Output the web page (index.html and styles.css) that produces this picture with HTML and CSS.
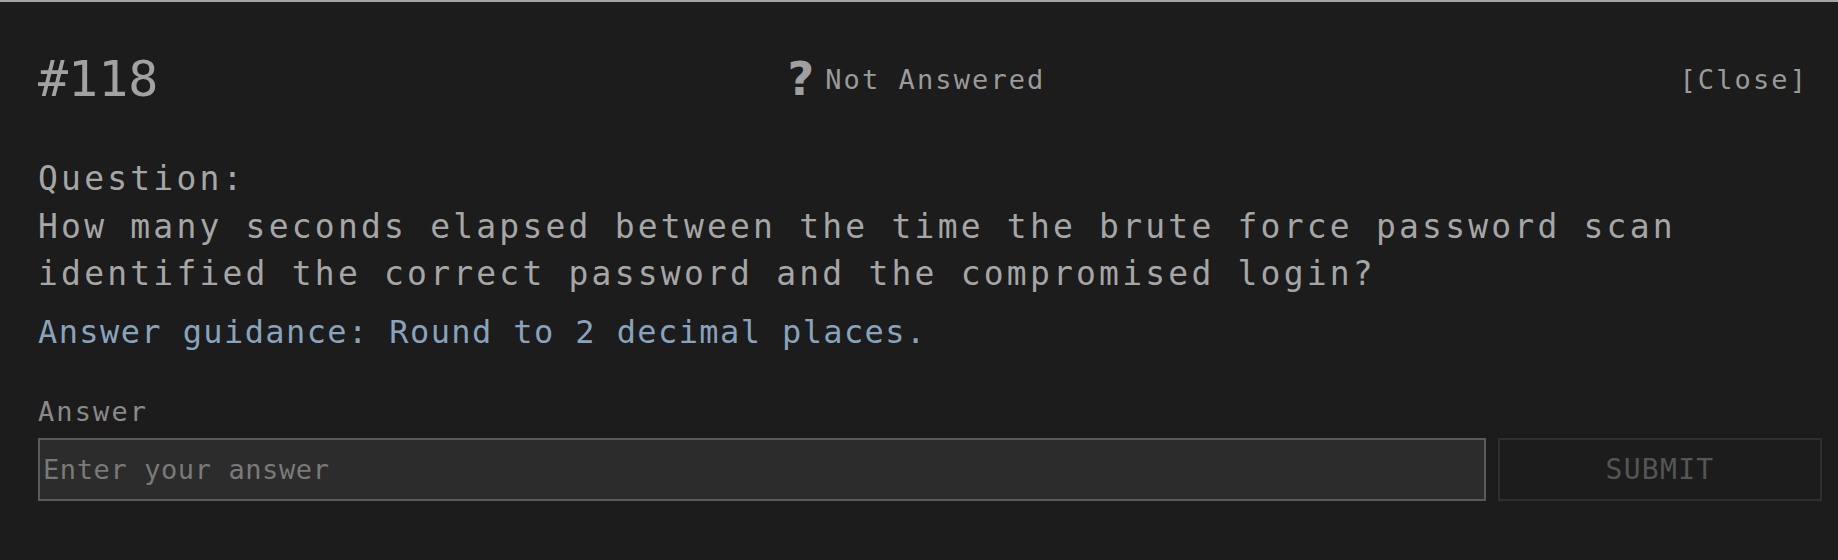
FILE: index.html
```html
<!DOCTYPE html>
<html lang="en">
<head>
<meta charset="utf-8">
<title>#118 Question</title>
<link rel="stylesheet" href="styles.css">
</head>
<body>
<div class="panel">
  <header class="head">
    <div class="num">#118</div>
    <div class="status"><span class="status-icon">?</span><span class="status-text">Not Answered</span></div>
    <div class="close-wrap"><span class="close">[Close]</span></div>
  </header>
  <section class="question">
    <div class="q-label">Question:</div>
    <div class="q-text">How many seconds elapsed between the time the brute force password scan identified the correct password and the compromised login?</div>
  </section>
  <div class="guidance">Answer guidance: Round to 2 decimal places.</div>
  <label class="answer-label" for="answer">Answer</label>
  <div class="answer-row">
    <input id="answer" class="answer-input" type="text" placeholder="Enter your answer">
    <button class="submit" type="button">SUBMIT</button>
  </div>
</div>
</body>
</html>
```
FILE: styles.css
```css
html, body {
  margin: 0;
  padding: 0;
  background: #1c1c1c;
}
body {
  font-family: "DejaVu Sans Mono", "Liberation Mono", monospace;
  color: #a0a0a0;
}
.panel {
  border-top: 2px solid #a4a4a4;
  padding: 52px 16px 0 38px;
  height: 506px;
}
.head {
  display: grid;
  grid-template-columns: 1fr auto 1fr;
  align-items: center;
  padding-right: 14px;
}
.num {
  font-size: 50px;
  line-height: 1;
  color: #a2a2a2;
}
.status {
  display: flex;
  align-items: center;
  padding-right: 13px;
  color: #9a9a9a;
}
.status-icon {
  font-family: "DejaVu Sans", sans-serif;
  font-weight: bold;
  font-size: 46px;
  line-height: 1;
  margin-right: 11px;
  color: #a0a0a0;
}
.status-text {
  font-size: 27px;
  line-height: 1;
  letter-spacing: 2.1px;
}
.close-wrap {
  display: flex;
  justify-content: flex-end;
}
.close {
  font-size: 27px;
  line-height: 1;
  letter-spacing: 2.1px;
  color: #9a9a9a;
}
.question {
  margin-top: 51px;
  font-size: 33px;
  line-height: 47.5px;
  letter-spacing: 3.2px;
  color: #a6a6a6;
}
.guidance {
  margin-top: 12px;
  font-size: 32px;
  line-height: 44.8px;
  letter-spacing: 1.4px;
  color: #89a2bd;
}
.answer-label {
  display: block;
  margin-top: 42px;
  font-size: 27px;
  line-height: 32.4px;
  letter-spacing: 2.1px;
  color: #8a8a8a;
}
.answer-row {
  display: flex;
  gap: 12px;
  margin-top: 9px;
  height: 63px;
}
.answer-input {
  flex: 1;
  box-sizing: border-box;
  height: 63px;
  margin: 0;
  padding: 0 0 0 3px;
  background: #2c2c2c;
  border: 2px solid #5a5a5a;
  border-radius: 0;
  outline: none;
  font-family: "DejaVu Sans Mono", "Liberation Mono", monospace;
  font-size: 27px;
  letter-spacing: 0.6px;
  color: #a0a0a0;
}
.answer-input::placeholder {
  color: #7a7a7a;
}
.submit {
  box-sizing: border-box;
  width: 324px;
  height: 63px;
  margin: 0;
  padding: 0;
  background: transparent;
  border: 2px solid #2f2f2f;
  border-radius: 0;
  font-family: "DejaVu Sans Mono", "Liberation Mono", monospace;
  font-size: 28px;
  letter-spacing: 1.3px;
  color: #555555;
}
```
